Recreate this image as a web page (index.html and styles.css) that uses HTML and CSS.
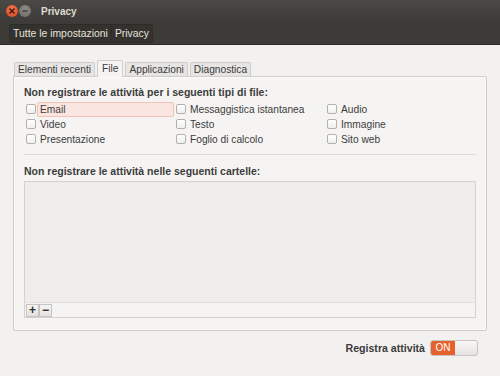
FILE: index.html
```html
<!DOCTYPE html>
<html lang="it">
<head>
  <meta charset="UTF-8">
  <title>Privacy</title>
  <link rel="stylesheet" href="styles.css">
</head>
<body>

<div class="window">
  <header class="titlebar">
    <span class="wbtn close">
      <svg width="8" height="8" viewBox="0 0 8 8"><path d="M1.5 1.5 L6.5 6.5 M6.5 1.5 L1.5 6.5" stroke="#3a1208" stroke-width="1.4"/></svg>
    </span>
    <span class="wbtn mini">
      <svg width="8" height="8" viewBox="0 0 8 8"><path d="M1.5 4 H6.5" stroke="#3a3a36" stroke-width="1.4"/></svg>
    </span>
    <span class="title">Privacy</span>
  </header>

  <div class="toolbar">
    <div class="crumbs">
      <span class="crumb">Tutte le impostazioni</span>
      <span class="crumb">Privacy</span>
    </div>
  </div>

  <main class="content">
    <div class="tabs">
      <span class="tab">Elementi recenti</span>
      <span class="tab active">File</span>
      <span class="tab">Applicazioni</span>
      <span class="tab">Diagnostica</span>
    </div>

    <section class="page">
      <h2 class="heading">Non registrare le attività per i seguenti tipi di file:</h2>
      <div class="check-grid">
        <label class="check"><span class="box"></span><span class="text focus">Email</span></label>
        <label class="check"><span class="box"></span><span class="text">Messaggistica istantanea</span></label>
        <label class="check"><span class="box"></span><span class="text">Audio</span></label>
        <label class="check"><span class="box"></span><span class="text">Video</span></label>
        <label class="check"><span class="box"></span><span class="text">Testo</span></label>
        <label class="check"><span class="box"></span><span class="text">Immagine</span></label>
        <label class="check"><span class="box"></span><span class="text">Presentazione</span></label>
        <label class="check"><span class="box"></span><span class="text">Foglio di calcolo</span></label>
        <label class="check"><span class="box"></span><span class="text">Sito web</span></label>
      </div>

      <hr class="sep">

      <h2 class="heading">Non registrare le attività nelle seguenti cartelle:</h2>
      <div class="folders"></div>
      <div class="list-tools">
        <span class="tool">+</span><span class="tool">&minus;</span>
      </div>
    </section>

    <div class="footer">
      <span class="switch-label">Registra attività</span>
      <span class="switch"><span class="on">ON</span><span class="knob"></span></span>
    </div>
  </main>
</div>

</body>
</html>
```

FILE: styles.css
```css
* { margin: 0; padding: 0; box-sizing: border-box; }
body {
  width: 500px;
  height: 376px;
  overflow: hidden;
  font-family: 'Liberation Sans', Arial, sans-serif;
  font-size: 10.2px;
  color: #3c3c3c;
  background: #f2f1f0;
}
.window { display: flex; flex-direction: column; height: 376px; }

.titlebar {
  height: 22px;
  background: linear-gradient(#4a4945, #3c3b37);
  display: flex;
  align-items: center;
  padding-left: 6px;
  gap: 1px;
}
.wbtn {
  width: 12px;
  height: 12px;
  border-radius: 50%;
  display: flex;
  align-items: center;
  justify-content: center;
}
.wbtn.close { background: radial-gradient(circle at 50% 35%, #f47a52, #d9431c); }
.wbtn.mini { background: radial-gradient(circle at 50% 35%, #8c8b86, #6a6964); }
.title { color: #dfdbd2; font-weight: bold; font-size: 10px; margin-left: 9px; }

.toolbar {
  height: 23px;
  background: #3c3b37;
  display: flex;
  align-items: center;
  padding-left: 9px;
  border-bottom: 1px solid #2b2a27;
}
.crumbs {
  display: flex;
  background: #33322f;
  border: 1px solid #2d2c29;
  border-radius: 2px;
}
.crumb { color: #e6e2da; padding: 3px 3px 3px; font-size: 10.4px; }
.crumb + .crumb { border-left: 1px solid #2d2c29; }

.content { flex: 1; padding: 15px 13px 0 13px; display: flex; flex-direction: column; }

.tabs { display: flex; align-items: flex-end; height: 16px; padding-left: 1px; gap: 2px; }
.tab {
  padding: 0 3px;
  height: 14px;
  line-height: 14px;
  background: #e6e5e3;
  border: 1px solid #cfcdc9;
  border-bottom: none;
  border-radius: 2px 2px 0 0;
  color: #3c3c3c;
}
.tab.active {
  height: 17px;
  line-height: 15px;
  background: #f5f4f3;
  position: relative;
  top: 1px;
  margin-top: -3px;
  padding: 0 4px;
}

.page {
  height: 255px;
  background: #f5f4f3;
  border: 1px solid #cfcdc9;
  border-radius: 0 2px 2px 2px;
  padding: 8px 10px 0 10px;
  box-shadow: 0 0 0 1px #fafaf9 inset;
}
.heading {
  font-size: 10.5px;
  font-weight: bold;
  color: #3c3c3c;
  height: 14px;
  line-height: 14px;
}

.check-grid {
  display: grid;
  grid-template-columns: 150px 151px 1fr;
  row-gap: 1px;
  margin-top: 3px;
}
.check { display: flex; align-items: center; gap: 1px; height: 14px; padding-left: 2px; color: #3c3c3c; }
.text { padding-left: 3px; line-height: 13px; }
.text.focus {
  flex: 1;
  height: 15px;
  line-height: 13px;
  padding-left: 2px;
  background: #fae5e0;
  border: 1px solid #f1c2b5;
  border-radius: 2px;
  margin-right: 0;
}
.box {
  width: 10px;
  height: 10px;
  border: 1px solid #b3b1ad;
  border-radius: 2px;
  background: linear-gradient(#ffffff, #f0efee);
  flex: none;
}

.sep { border: none; border-top: 1px solid #dcdad6; margin: 8px 0 9px; }

.folders {
  height: 121px;
  margin-top: 3px;
  background: #eeedeb;
  border: 1px solid #d4d2ce;
  border-bottom: none;
}
.list-tools {
  height: 16px;
  border: 1px solid #d4d2ce;
  border-top: 1px solid #e2e0dc;
  background: #f5f4f3;
  display: flex;
  padding: 1px 1px;
}
.tool {
  width: 13px;
  height: 13px;
  line-height: 11px;
  text-align: center;
  border: 1px solid #c6c4c0;
  background: linear-gradient(#f6f5f4, #e3e2e0);
  color: #2f2f2f;
  font-weight: bold;
  font-size: 12px;
}

.footer {
  display: flex;
  justify-content: flex-end;
  align-items: center;
  gap: 5px;
  margin-top: 9px;
  padding-right: 9px;
}
.switch-label { font-weight: bold; font-size: 10.6px; color: #3c3c3c; }
.switch {
  width: 48px;
  height: 16px;
  border: 1px solid #c7c5c1;
  border-radius: 3px;
  display: flex;
  overflow: hidden;
  background: linear-gradient(#f8f8f7, #e4e3e1);
}
.on {
  width: 24px;
  background: #e6622c;
  color: #fff;
  font-size: 10px;
  text-align: center;
  line-height: 14px;
}
.knob { flex: 1; }
```
